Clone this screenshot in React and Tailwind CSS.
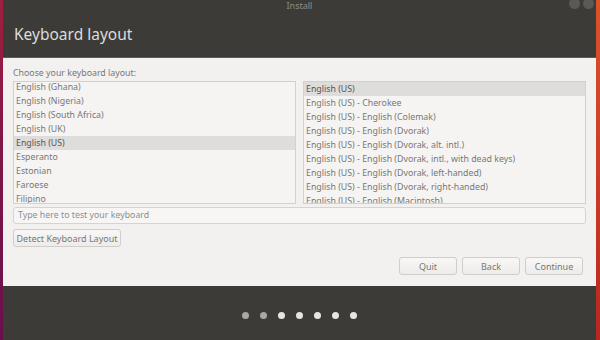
import React from "react";

const leftItems = [
  "English (Ghana)",
  "English (Nigeria)",
  "English (South Africa)",
  "English (UK)",
  "English (US)",
  "Esperanto",
  "Estonian",
  "Faroese",
  "Filipino",
];

const rightItems = [
  "English (US)",
  "English (US) - Cherokee",
  "English (US) - English (Colemak)",
  "English (US) - English (Dvorak)",
  "English (US) - English (Dvorak, alt. intl.)",
  "English (US) - English (Dvorak, intl., with dead keys)",
  "English (US) - English (Dvorak, left-handed)",
  "English (US) - English (Dvorak, right-handed)",
  "English (US) - English (Macintosh)",
];

function LayoutList({ items, selected, offset }) {
  return (
    <div className="flex-1 h-[123px] overflow-hidden border border-[#d3d1ce] bg-[#f5f4f3]">
      <div className={offset}>
        {items.map((item) => (
          <div
            key={item}
            className={
              "h-[14px] leading-[14px] pl-[2px] whitespace-nowrap " +
              (item === selected ? "bg-[#dfdddb] text-[#555555]" : "text-[#777777]")
            }
          >
            {item}
          </div>
        ))}
      </div>
    </div>
  );
}

function Button({ children, className = "" }) {
  return (
    <button
      className={
        "h-[18px] whitespace-nowrap rounded-[3px] border border-[#d0cecb] bg-gradient-to-b from-[#f8f7f6] to-[#eeecea] text-[#777777] text-[9px] leading-none " +
        className
      }
    >
      {children}
    </button>
  );
}

export default function App() {
  return (
    <div
      className="w-[600px] h-[340px] flex overflow-hidden"
      style={{ fontFamily: '"Noto Sans", "Open Sans", sans-serif' }}
    >
      <div className="w-[3px] bg-gradient-to-b from-[#a01f3f] via-[#7c1648] to-[#6a0f4c]" />
      <div className="flex-1 flex flex-col bg-[#3c3b37]">
        {/* Title bar */}
        <div className="h-[14px] relative flex items-start justify-center">
          <span className="text-[9px] leading-[12px] text-[#8f8d88]">Install</span>
          <div className="absolute right-[2px] -top-[2px] flex gap-[3px]">
            <div className="w-[11px] h-[11px] rounded-full bg-[#5a5954]" />
            <div className="w-[11px] h-[11px] rounded-full bg-[#5a5954]" />
          </div>
        </div>
        {/* Header */}
        <div className="h-[43px] flex items-center pl-[11px] pb-[1px]">
          <h1 className="text-[15.5px] text-[#dcdcdc] font-normal">Keyboard layout</h1>
        </div>
        {/* Content */}
        <div className="h-[229px] bg-[#f2f1f0] border-t border-[#5c5b57] flex flex-col px-[10px] text-[8.8px]">
          <div className="mt-[9px] h-[12px] leading-[12px] text-[#777777]">Choose your keyboard layout:</div>
          <div className="mt-[2px] flex gap-[7px]">
            <LayoutList items={leftItems} selected="English (US)" offset="-mt-[2px]" />
            <LayoutList items={rightItems} selected="English (US)" offset="mt-0" />
          </div>
          <div className="mt-[3px] h-[17px] rounded-[3px] border border-[#d6d4d1] bg-[#f7f6f5] flex items-center pl-[4px] text-[#8f8f8f]">
            Type here to test your keyboard
          </div>
          <div className="mt-[5px]">
            <Button className="w-[108px]">Detect Keyboard Layout</Button>
          </div>
          <div className="mt-[10px] mr-[3px] flex justify-end gap-[5px]">
            <Button className="w-[58px]">Quit</Button>
            <Button className="w-[58px]">Back</Button>
            <Button className="w-[58px]">Continue</Button>
          </div>
        </div>
        {/* Footer dots */}
        <div className="flex-1 flex items-center justify-center gap-[11px] pt-[4px]">
          <div className="w-[7px] h-[7px] rounded-full bg-[#a9a8a4]" />
          <div className="w-[7px] h-[7px] rounded-full bg-[#a9a8a4]" />
          <div className="w-[7px] h-[7px] rounded-full bg-[#e6e5e3]" />
          <div className="w-[7px] h-[7px] rounded-full bg-[#e6e5e3]" />
          <div className="w-[7px] h-[7px] rounded-full bg-[#e6e5e3]" />
          <div className="w-[7px] h-[7px] rounded-full bg-[#e6e5e3]" />
          <div className="w-[7px] h-[7px] rounded-full bg-[#e6e5e3]" />
        </div>
      </div>
      <div className="w-[4px] bg-gradient-to-b from-[#d8542a] to-[#b8251f]" />
    </div>
  );
}
